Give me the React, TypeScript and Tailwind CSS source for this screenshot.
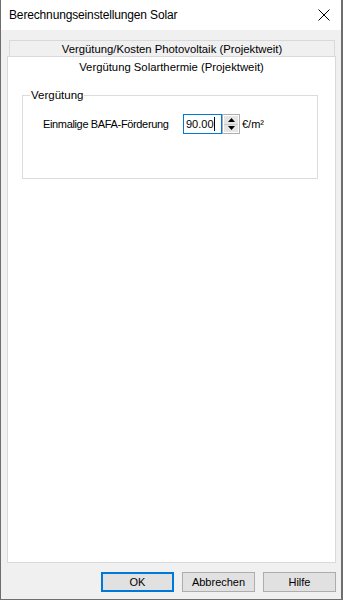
import React from "react";

const uiFont = { fontFamily: '"Liberation Sans", Arial, sans-serif' };
const dlgFont = { fontFamily: '"Liberation Sans", Arial, sans-serif' };

function CloseIcon() {
  return (
    <svg width="12" height="12" viewBox="0 0 12 12" className="block">
      <path d="M0.5 0.5 L11.5 11.5 M11.5 0.5 L0.5 11.5" stroke="#000" strokeWidth="1" fill="none" />
    </svg>
  );
}

function Spinner() {
  return (
    <div className="flex flex-col w-[18px] h-[20px] border border-[#adadad] bg-white">
      <div className="flex-1 flex items-center justify-center bg-[#e5e5e5] border-b border-[#c8c8c8] m-[1px] mb-0">
        <svg width="7" height="4" viewBox="0 0 7 4">
          <path d="M3.5 0 L7 4 L0 4 Z" fill="#000" />
        </svg>
      </div>
      <div className="flex-1 flex items-center justify-center bg-[#e5e5e5] m-[1px] mt-0">
        <svg width="7" height="4" viewBox="0 0 7 4">
          <path d="M0 0 L7 0 L3.5 4 Z" fill="#000" />
        </svg>
      </div>
    </div>
  );
}

export default function App() {
  const buttons = ["OK", "Abbrechen", "Hilfe"];

  return (
    <div className="w-[343px] h-[600px] flex flex-col bg-white border-l border-r-2 border-b border-[#6e6e6e] overflow-hidden">
      {/* Title bar */}
      <div className="h-[30px] flex items-center justify-between bg-white pl-[8px] pr-[11px]">
        <span className="text-[12px] text-black whitespace-nowrap tracking-[-0.15px]" style={uiFont}>
          Berechnungseinstellungen Solar
        </span>
        <CloseIcon />
      </div>

      {/* Body */}
      <div className="flex-1 flex flex-col bg-[#f0f0f0] pt-[10px] pb-[7px]">
        {/* Inactive tab */}
        <div
          className="ml-[8px] w-[326px] h-[16px] pt-[2px] border border-b-0 border-[#d9d9d9] flex items-center justify-center text-[11.3px] text-black leading-none whitespace-nowrap"
          style={uiFont}
        >
          Vergütung/Kosten Photovoltaik (Projektweit)
        </div>

        {/* Active tab + panel */}
        <div className="ml-[6px] w-[329px] flex-1 bg-white border border-[#d9d9d9] flex flex-col">
          <div className="h-[20px] flex items-center justify-center text-[11.3px] text-black whitespace-nowrap" style={uiFont}>
            Vergütung Solarthermie (Projektweit)
          </div>

          <fieldset className="ml-[14px] mt-[11px] w-[296px] h-[91px] border border-[#dcdcdc] px-0 pb-0">
            <legend className="ml-[7px] px-[1px] text-[11.5px] text-black leading-[14px]" style={uiFont}>
              Vergütung
            </legend>
            <div className="flex items-center mt-[12px]">
              <span className="ml-[20px] w-[140px] text-[11px] text-black whitespace-nowrap tracking-[-0.35px]" style={dlgFont}>
                Einmalige BAFA-Förderung
              </span>
              <div className="w-[39px] h-[20px] border border-[#0078d7] bg-white flex items-center pl-[2px] text-[11px] text-black" style={dlgFont}>
                <span>90.00</span>
                <span className="w-[1px] h-[14px] bg-black" />
              </div>
              <Spinner />
              <span className="ml-[2px] text-[11px] text-black" style={dlgFont}>
                €/m²
              </span>
            </div>
          </fieldset>
        </div>

        {/* Buttons */}
        <div className="flex justify-end gap-[8px] mt-[9px] pr-[5px]">
          {buttons.map((b) => (
            <button
              key={b}
              className={
                "w-[73px] h-[20px] bg-[#e1e1e1] flex items-center justify-center text-[11px] text-black " +
                (b === "OK" ? "border-2 border-[#0078d7]" : "border border-[#adadad]")
              }
              style={dlgFont}
            >
              {b}
            </button>
          ))}
        </div>
      </div>
    </div>
  );
}
